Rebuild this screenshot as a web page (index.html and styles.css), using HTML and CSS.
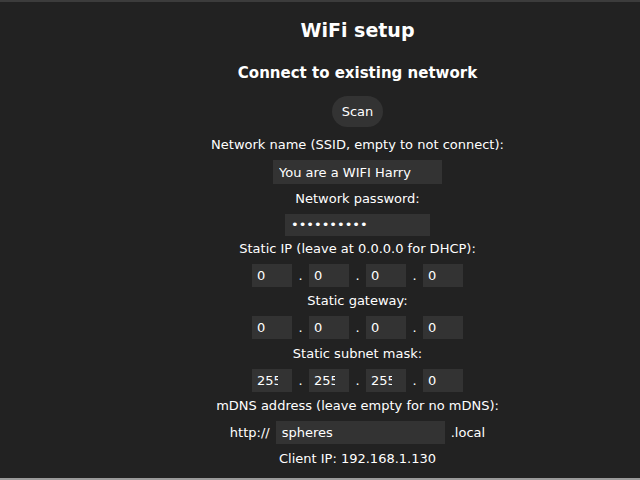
FILE: index.html
```html
<!DOCTYPE html>
<html lang="en">
<head>
    <meta charset="UTF-8">
    <meta name="viewport" content="width=device-width, initial-scale=1.0">
    <title>WiFi setup</title>
    <link rel="stylesheet" href="styles.css">
</head>
<body>
    <main class="page">
        <h1 class="title">WiFi setup</h1>
        <h2 class="subtitle">Connect to existing network</h2>
        <button class="scanBtn">Scan</button>

        <p class="label first">Network name (SSID, empty to not connect):</p>
        <div class="row">
            <input class="field ssid" type="text" value="You are a WIFI Harry">
        </div>
        <p class="label">Network password:</p>
        <div class="row">
            <input class="field pass" type="password" value="1234567890">
        </div>

        <p class="label afterPass">Static IP (leave at 0.0.0.0 for DHCP):</p>
        <div class="row">
            <input class="field ip" value="0"><span class="dot">.</span>
            <input class="field ip" value="0"><span class="dot">.</span>
            <input class="field ip" value="0"><span class="dot">.</span>
            <input class="field ip" value="0">
        </div>
        <p class="label">Static gateway:</p>
        <div class="row">
            <input class="field ip" value="0"><span class="dot">.</span>
            <input class="field ip" value="0"><span class="dot">.</span>
            <input class="field ip" value="0"><span class="dot">.</span>
            <input class="field ip" value="0">
        </div>
        <p class="label">Static subnet mask:</p>
        <div class="row">
            <input class="field ip" value="255"><span class="dot">.</span>
            <input class="field ip" value="255"><span class="dot">.</span>
            <input class="field ip" value="255"><span class="dot">.</span>
            <input class="field ip" value="0">
        </div>

        <p class="label">mDNS address (leave empty for no mDNS):</p>
        <div class="row mdnsRow">
            <span>http://</span>
            <input class="field mdns" type="text" value="spheres">
            <span>.local</span>
        </div>
        <p class="label">Client IP: 192.168.1.130</p>
    </main>
</body>
</html>
```

FILE: styles.css
```css
*{
    margin: 0; padding: 0;
    box-sizing: border-box;
    font-family: "DejaVu Sans", Verdana, sans-serif;
}
html, body{
    background-color: #222222;
}
.page{
    height: 480px;
    padding-left: 75px;
    border-top: 2px solid #3c3c3c;
    border-bottom: 2px solid #9a9a9a;
    color: #ffffff;
    font-size: 13px;
    display: flex;
    flex-direction: column;
    align-items: center;
    overflow: hidden;
}
.title{
    font-size: 19px;
    font-weight: bold;
    margin-top: 16px;
    line-height: 24px;
}
.subtitle{
    font-size: 15px;
    font-weight: bold;
    margin-top: 21px;
    line-height: 20px;
}
.scanBtn{
    margin-top: 13px;
    width: 51px;
    height: 31px;
    border: 0;
    border-radius: 16px;
    background-color: #333333;
    color: #ffffff;
    font-size: 13px;
}
.label{
    line-height: 16px;
    margin-top: 6.5px;
}
.label.first{
    margin-top: 10px;
}
.label.afterPass{
    margin-top: 5px;
}
.row{
    display: flex;
    align-items: center;
    margin-top: 7px;
}
.field{
    height: 23px;
    border: 0;
    outline: 0;
    background-color: #333333;
    color: #ffffff;
    font-size: 13px;
    padding: 0 6px;
}
.ssid{
    width: 169px;
    height: 24px;
}
.pass{
    width: 145px;
    height: 22px;
}
.ip{
    width: 40px;
    padding: 0 14px 0 5px;
}
.dot{
    width: 17px;
    text-align: center;
}
.mdns{
    width: 169px;
}
.mdnsRow{
    gap: 6px;
}
```
